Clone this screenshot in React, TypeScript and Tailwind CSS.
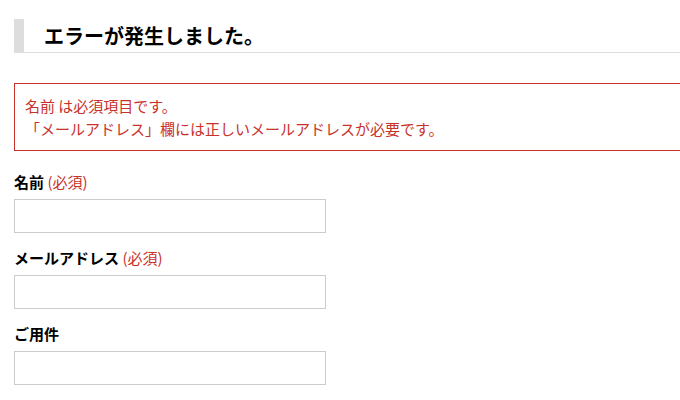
import React from "react";

const fields = [
  { label: "名前", required: true },
  { label: "メールアドレス", required: true },
  { label: "ご用件", required: false },
];

const errors = [
  "名前 は必須項目です。",
  "「メールアドレス」欄には正しいメールアドレスが必要です。",
];

export default function App() {
  return (
    <div
      className="w-[680px] h-[400px] overflow-hidden bg-white text-black"
      style={{ fontFamily: '"Noto Sans CJK JP", "Noto Sans", sans-serif' }}
    >
      <div className="w-[740px] pl-[14px] pt-[19px]">
        {/* Heading */}
        <h1 className="h-[34px] flex items-center border-l-[10px] border-b border-[#dddddd] pl-[20px] text-[20px] font-bold leading-none">
          エラーが発生しました。
        </h1>

        {/* Error messages */}
        <div className="mt-[30px] border border-[#c9322a] pl-[10px] py-[10px] text-[15px] leading-[23px] text-[#c9322a]">
          {errors.map((e) => (
            <p key={e}>{e}</p>
          ))}
        </div>

        {/* Form */}
        <form className="mt-[19px] flex flex-col">
          {fields.map((f) => (
            <div key={f.label} className="flex flex-col pb-[13px]">
              <label className="text-[15px] leading-[24px] font-bold">
                {f.label}
                {f.required && (
                  <span className="font-normal text-[#c9322a]"> (必須)</span>
                )}
              </label>
              <input
                type="text"
                className="mt-[5px] w-[312px] h-[34px] border border-[#cccccc] bg-white outline-none"
              />
            </div>
          ))}
        </form>
      </div>
    </div>
  );
}
